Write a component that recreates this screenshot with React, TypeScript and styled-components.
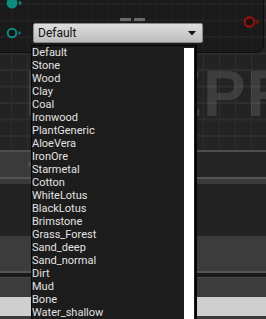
import React from "react";
import styled, { createGlobalStyle } from "styled-components";

const Global = createGlobalStyle`
  html, body { margin: 0; padding: 0; background: #232323; }
  body { font-family: Roboto, "Liberation Sans", sans-serif; }
`;

const Screen = styled.div`
  position: relative;
  width: 266px;
  height: 319px;
  overflow: hidden;
  background: #232323;
  display: flex;
  flex-direction: column;
`;

const Graph = styled.div`
  position: relative;
  height: 150px;
  flex: none;
  background-color: #232323;
  background-image:
    linear-gradient(#2e2e2e 1.5px, transparent 1.5px),
    linear-gradient(90deg, #2e2e2e 1.5px, transparent 1.5px);
  background-size: 16px 16.5px;
  background-position: 11px 3px;
  overflow: hidden;
`;

const Watermark = styled.div`
  position: absolute;
  right: -134px;
  top: 62px;
  font-family: "Liberation Sans", Roboto, sans-serif;
  font-weight: bold;
  font-size: 64px;
  letter-spacing: 1px;
  color: rgba(255, 255, 255, 0.12);
  white-space: nowrap;
  line-height: 1;
`;

const Node = styled.div`
  position: absolute;
  left: -12px;
  top: -12px;
  width: 274px;
  height: 63px;
  background: rgba(8, 8, 8, 0.3);
  border: 1.5px solid #0c0c0c;
  border-radius: 0 0 9px 9px;
`;

const Pin = styled.svg<{ $x: number; $y: number }>`
  position: absolute;
  left: ${(p) => p.$x}px;
  top: ${(p) => p.$y}px;
`;

const Handle = styled.div<{ $x: number }>`
  position: absolute;
  top: 18px;
  left: ${(p) => p.$x}px;
  width: 11px;
  height: 2.5px;
  background: #6a6a6a;
`;

const Combo = styled.div`
  position: absolute;
  left: 33px;
  top: 23px;
  width: 170px;
  height: 20px;
  box-sizing: border-box;
  border: 1px solid #8a8a8a;
  border-radius: 2px;
  background: linear-gradient(#dedede, #bdbdbd);
  display: flex;
  align-items: center;
  justify-content: space-between;
  padding: 0 6px 0 4px;
  color: #111;
  font-size: 12px;
`;

const List = styled.div`
  position: absolute;
  left: 31px;
  top: 45px;
  width: 166px;
  height: 290px;
  box-sizing: border-box;
  border: 1px solid #050505;
  border-right-width: 2px;
  background: #1c1c1c;
  display: flex;
`;

const Items = styled.div`
  flex: 1;
  display: flex;
  flex-direction: column;
`;

const Item = styled.div`
  height: 13px;
  line-height: 13px;
  font-size: 11px;
  color: #e2e2e2;
  white-space: nowrap;
`;

const Track = styled.div`
  width: 10px;
  margin: 2px 1px 0 0;
  background: #ffffff;
`;

const Band = styled.div<{ $h: number; $c: string }>`
  height: ${(p) => p.$h}px;
  flex: none;
  background: ${(p) => p.$c};
  display: flex;
`;

const Tab = styled.div`
  width: 34px;
  background: #3a3a3a;
  display: flex;
  align-items: center;
  justify-content: flex-end;
  padding-right: 2px;
  color: #5a5a5a;
  font-size: 10px;
`;

const items = [
  "Default", "Stone", "Wood", "Clay", "Coal", "Ironwood", "PlantGeneric",
  "AloeVera", "IronOre", "Starmetal", "Cotton", "WhiteLotus", "BlackLotus",
  "Brimstone", "Grass_Forest", "Sand_deep", "Sand_normal", "Dirt", "Mud",
  "Bone", "Water_shallow",
];

export default function App() {
  return (
    <>
      <Global />
      <Screen>
        <Graph>
          <Watermark>BLUEPRINT</Watermark>
          <Node />
          <Handle $x={120} />
          <Handle $x={134} />
          <Pin $x={5} $y={-4} width="18" height="14" viewBox="0 0 18 14">
            <circle cx="7" cy="7" r="5.5" fill="#0e8a7e" />
            <polygon points="14,4.5 17,7 14,9.5" fill="#0e8a7e" />
          </Pin>
          <Pin $x={5} $y={26} width="18" height="14" viewBox="0 0 18 14">
            <circle cx="7" cy="7" r="4.3" fill="#161616" stroke="#0e8a7e" strokeWidth="2" />
            <polygon points="13.5,4.8 16,7 13.5,9.2" fill="#0e8a7e" />
          </Pin>
          <Pin $x={242} $y={15} width="20" height="14" viewBox="0 0 20 14">
            <circle cx="7.5" cy="7" r="4.8" fill="#161616" stroke="#a80c0c" strokeWidth="2" />
            <polygon points="14.5,4.8 17,7 14.5,9.2" fill="#a80c0c" />
          </Pin>
          <Combo>
            <span>Default</span>
            <svg width="8" height="5" viewBox="0 0 8 5">
              <polygon points="0,0 8,0 4,4.5" fill="#111" />
            </svg>
          </Combo>
        </Graph>
        <Band $h={2} $c="#4d4d4d" />
        <Band $h={25} $c="#252525">
          <Tab>✕</Tab>
        </Band>
        <Band $h={2} $c="#555555" />
        <Band $h={5} $c="#3a3a3a" />
        <Band $h={52} $c="#232323" />
        <Band $h={35} $c="#3c3c3c" />
        <Band $h={2} $c="#555555" />
        <Band $h={4} $c="#1a1a1a" />
        <Band $h={1} $c="#4a4a4a" />
        <Band $h={19} $c="#3c3c3c" />
        <Band $h={19} $c="#cfcfcf" />
        <Band $h={3} $c="#3a3a3a" />
        <List>
          <Items>
            {items.map((it) => (
              <Item key={it}>{it}</Item>
            ))}
          </Items>
          <Track />
        </List>
      </Screen>
    </>
  );
}
